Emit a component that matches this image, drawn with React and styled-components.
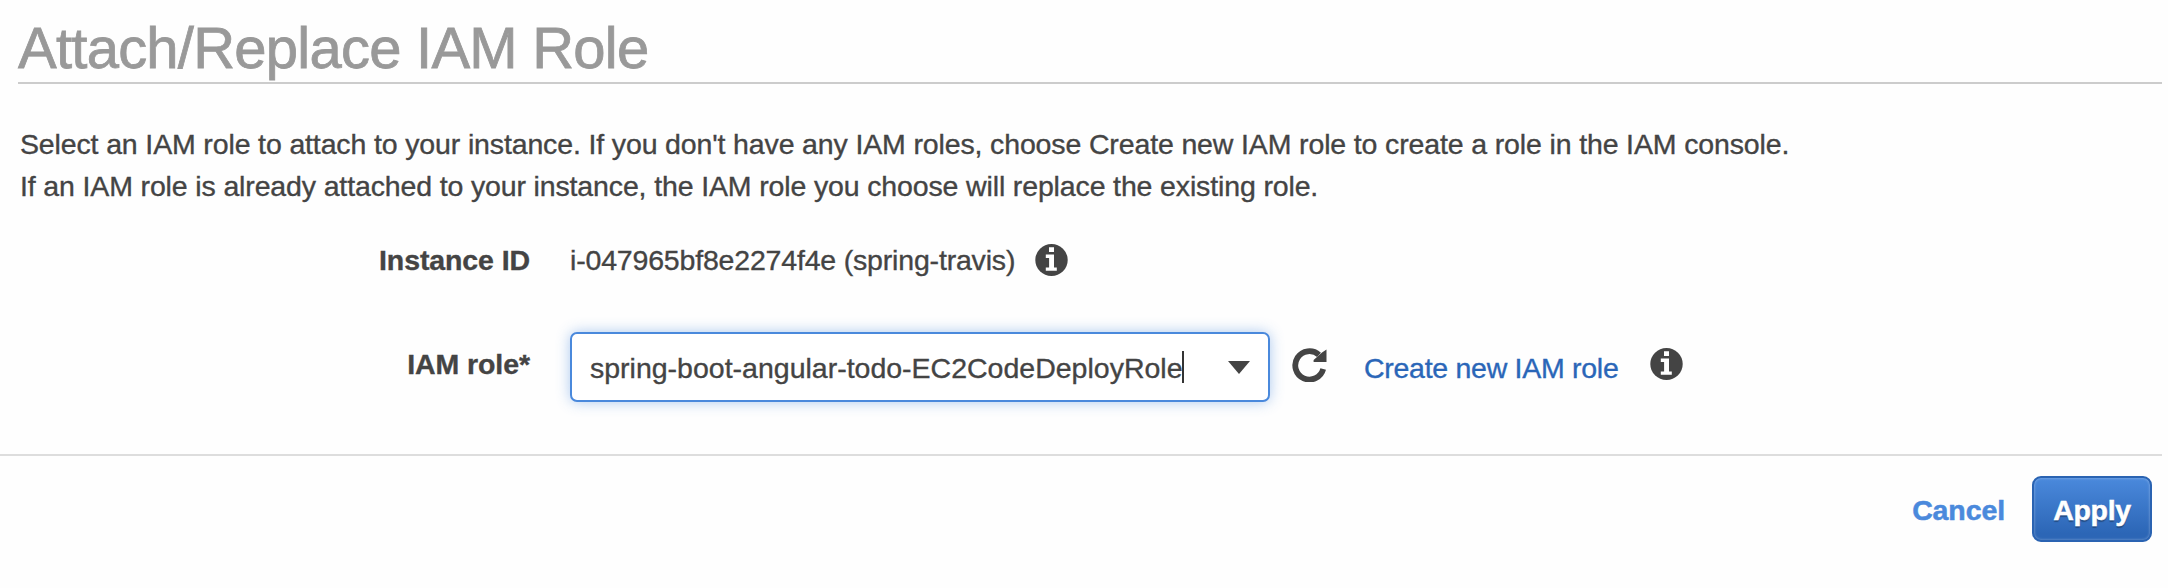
import React from "react";
import styled, { createGlobalStyle } from "styled-components";

const GlobalStyle = createGlobalStyle`
  * { box-sizing: border-box; }
  body {
    margin: 0;
    background: #fefefe;
    color: #444;
    font-family: "Liberation Sans", Arial, sans-serif;
    font-size: 28.5px;
    -webkit-text-stroke: 0.35px currentColor;
  }
`;

const Dialog = styled.main`
  width: 2162px;
  height: 588px;
  display: flex;
  flex-direction: column;
`;

const Header = styled.header`
  margin-left: 18px;
  height: 84px;
  border-bottom: 2px solid #ccc;
`;

const Title = styled.h1`
  margin: 0;
  padding-top: 15px;
  font-size: 58px;
  line-height: 66px;
  font-weight: 400;
  color: #999;
  letter-spacing: ${(p) => p.$spacing}px;
  white-space: nowrap;
  -webkit-text-stroke-width: 0.8px;
`;

const Intro = styled.p`
  margin: 39px 0 0 20px;
  line-height: 42px;
  white-space: nowrap;
`;

const Line = styled.span`
  display: block;
  letter-spacing: ${(p) => p.$spacing}px;
`;

const Field = styled.div`
  display: flex;
  align-items: center;
  height: ${(p) => p.$height}px;
  margin-top: ${(p) => p.$gap}px;
`;

const Label = styled.label`
  width: 530px;
  margin-right: 40px;
  text-align: right;
  font-weight: 700;
  letter-spacing: ${(p) => p.$spacing}px;
  padding-bottom: ${(p) => p.$lift || 0}px;
`;

const Value = styled.span`
  width: 465px;
  white-space: nowrap;
  letter-spacing: ${(p) => p.$spacing}px;
`;

const Select = styled.div`
  display: flex;
  align-items: center;
  width: 700px;
  height: 70px;
  padding: 0 18px;
  background: #fff;
  border: 2px solid #4a89dc;
  border-radius: 7px;
  box-shadow: 0 0 14px rgba(74, 137, 220, 0.45);
`;

const SelectText = styled.span`
  white-space: nowrap;
  padding-top: 2px;
  letter-spacing: ${(p) => p.$spacing}px;
`;

const Caret = styled.span`
  width: 2px;
  height: 32px;
  margin-left: -1px;
  background: #333;
`;

const Arrow = styled.svg`
  margin-left: auto;
`;

const RefreshIcon = styled.svg`
  margin: 0 37px 4px 22px;
`;

const Link = styled.a`
  width: 286px;
  padding-top: 2px;
  color: #2a66b8;
  white-space: nowrap;
  letter-spacing: ${(p) => p.$spacing}px;
`;

const InfoSvg = styled.svg`
  flex: none;
  margin-bottom: ${(p) => p.$lift || 0}px;
`;

const Footer = styled.footer`
  display: flex;
  justify-content: flex-end;
  align-items: center;
  margin-top: 52px;
  height: 108px;
  padding: 0 10px 0 0;
  border-top: 2px solid #ddd;
`;

const Button = styled.button`
  font: 700 28.5px "Liberation Sans", Arial, sans-serif;
  letter-spacing: ${(p) => p.$spacing}px;
  padding: 2px 0 0;
  border: 0;
  background: none;
  color: #4a89dc;
  -webkit-text-stroke: 0.5px currentColor;
`;

const PrimaryButton = styled(Button)`
  width: 120px;
  height: 66px;
  margin-left: 27px;
  color: #fff;
  border: 2px solid #2a63b2;
  border-radius: 9px;
  background: linear-gradient(#4a89dc, #2c66b6 90%);
  box-shadow: inset 0 0 3px rgba(255, 255, 255, 0.4);
  text-shadow: 0 2px 1px rgba(0, 0, 0, 0.3);
`;

const InfoIcon = ({ lift }) => (
  <InfoSvg $lift={lift} width="33" height="32" viewBox="0 0 33 32">
    <ellipse cx="16.5" cy="16" rx="16.2" ry="16" fill="#444" />
    <path d="M14 3.3h5v4.7h-5zM10.8 10.6h8.2v12.9h2.8v3.3H10.8v-3.3h3.3v-9.4h-3.3z" fill="#fff" />
  </InfoSvg>
);

export default function App() {
  return (
    <>
      <GlobalStyle />
      <Dialog>
        <Header>
          <Title $spacing={-0.76}>Attach/Replace IAM Role</Title>
        </Header>
        <Intro>
          <Line $spacing={-0.14}>
            Select an IAM role to attach to your instance. If you don't have any IAM roles, choose Create new IAM role to create a role in the IAM console.
          </Line>
          <Line $spacing={-0.14}>
            If an IAM role is already attached to your instance, the IAM role you choose will replace the existing role.
          </Line>
        </Intro>
        <Field $height={32} $gap={37}>
          <Label $spacing={-0.1}>Instance ID</Label>
          <Value $spacing={-0.18}>i-047965bf8e2274f4e (spring-travis)</Value>
          <InfoIcon />
        </Field>
        <Field $height={70} $gap={56}>
          <Label $spacing={-0.08} $lift={5}>IAM role*</Label>
          <Select>
            <SelectText $spacing={0}>spring-boot-angular-todo-EC2CodeDeployRole</SelectText>
            <Caret />
            <Arrow width="22" height="13" viewBox="0 0 22 13">
              <path d="M0 0h22L11 13z" fill="#444" />
            </Arrow>
          </Select>
          <RefreshIcon width="35" height="34" viewBox="0 0 35 34">
            <path d="M31.2 21A14.2 14.2 0 1 1 27 6.8" fill="none" stroke="#444" strokeWidth="5.8" />
            <path d="M34.5 1.5v12.5H21.6v-2L25 9l5-4.5z" fill="#444" />
          </RefreshIcon>
          <Link $spacing={-0.28}>Create new IAM role</Link>
          <InfoIcon lift={6} />
        </Field>
        <Footer>
          <Button $spacing={-0.1}>Cancel</Button>
          <PrimaryButton $spacing={-0.3}>Apply</PrimaryButton>
        </Footer>
      </Dialog>
    </>
  );
}
